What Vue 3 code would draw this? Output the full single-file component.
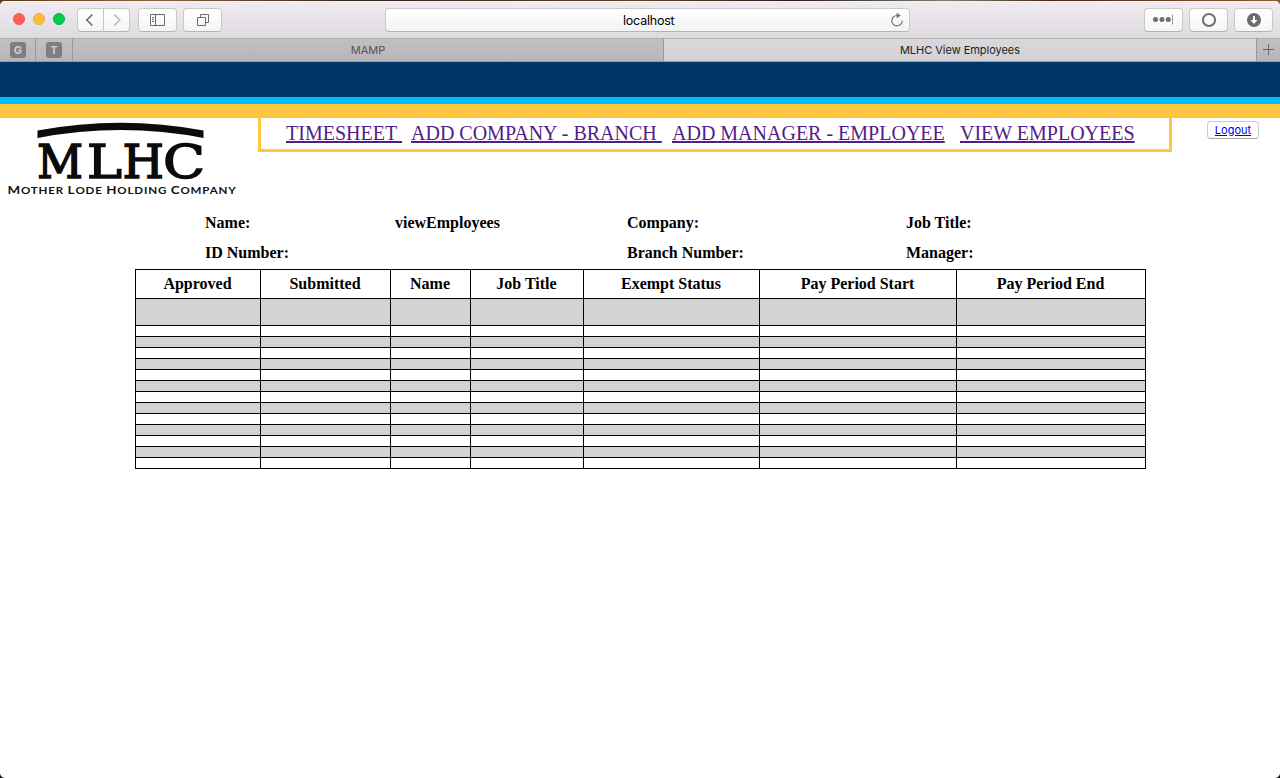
<script setup>
const links = ['TIMESHEET\u00a0', 'ADD COMPANY - BRANCH\u00a0', 'ADD MANAGER - EMPLOYEE', 'VIEW EMPLOYEES']
const info = ['Name:', 'viewEmployees', 'Company:', 'Job Title:', 'ID Number:', '', 'Branch Number:', 'Manager:']
const columns = [
  { label: 'Approved', width: 125 },
  { label: 'Submitted', width: 130 },
  { label: 'Name', width: 80 },
  { label: 'Job Title', width: 113 },
  { label: 'Exempt Status', width: 176 },
  { label: 'Pay Period Start', width: 197 },
  { label: 'Pay Period End', width: 189 },
]
</script>

<template>
  <div class="desktop">
    <div class="window">
      <header class="toolbar">
        <div class="lights"><i class="red"></i><i class="amber"></i><i class="green"></i></div>
        <div class="history">
          <button class="btn half"><svg width="25" height="22" viewBox="0 0 25 22"><path d="M14.300 5.600 8.800 11l5.500 5.500" fill="none" stroke="#666" stroke-width="1.500" /></svg></button>
          <button class="btn half"><svg width="25" height="22" viewBox="0 0 25 22"><path d="M10.300 5.600 15.800 11l-5.500 5.500" fill="none" stroke="#bbb" stroke-width="1.500" /></svg></button>
        </div>
        <button class="btn side"><svg width="37" height="22" viewBox="0 0 37 22"><path d="M11.500 5.500h14v11h-14zM16.500 5.500v11M13 8.500h2M13 10.500h2M13 12.500h2" fill="none" stroke="#6b6b6b" /></svg></button>
        <button class="btn pages"><svg width="37" height="22" viewBox="0 0 37 22"><path d="M13.500 8.500h8v8h-8zM16.500 8V5.500h8v8H22" fill="none" stroke="#6b6b6b" /></svg></button>
        <div class="address">
          <span>localhost</span>
          <svg class="reload" width="14" height="16" viewBox="0 0 14 16"><path d="M7 3.500A5.200 5.200 0 1 0 12.200 8.700" fill="none" stroke="#747474" stroke-width="1.200" /><path d="M6.600 .8v5.400l4.400-2.700z" fill="#747474" /></svg>
        </div>
        <div class="extras">
          <button class="btn"><svg width="37" height="22" viewBox="0 0 37 22"><g fill="#6e6e6e"><circle cx="10.500" cy="10.500" r="2.500" /><circle cx="17" cy="10.500" r="2.500" /><circle cx="23.300" cy="10.500" r="2.500" /></g><path d="M27.500 5.500v10" stroke="#999" /></svg></button>
          <button class="btn"><svg width="37" height="22" viewBox="0 0 37 22"><circle cx="19" cy="11" r="6.100" fill="none" stroke="#707070" stroke-width="2" /></svg></button>
          <button class="btn"><svg width="37" height="22" viewBox="0 0 37 22"><circle cx="19" cy="11" r="7" fill="#6b6b6b" /><path d="M18 7h2v4h2.500L19 15l-3.500-4H18z" fill="#fff" /></svg></button>
        </div>
      </header>

      <div class="tabs">
        <div class="pin"><b>G</b></div>
        <div class="pin"><b>T</b></div>
        <div class="tab mamp">MAMP</div>
        <div class="tab active">MLHC View Employees</div>
        <div class="plus"><svg width="23" height="22" viewBox="0 0 23 22"><path d="M6 10.500h11M11.500 5v11" stroke="#666" /></svg></div>
      </div>

      <div class="band navy"></div>
      <div class="band cyan"></div>
      <div class="band gold"></div>

      <section class="masthead">
        <svg class="logo" width="250" height="82" viewBox="0 0 250 82">
          <path d="M37.500 12.500Q121-3 203.500 12.500V20Q121 4 37.500 20z" fill="#0b0b0b" />
          <g class="letters">
            <text x="37" y="60" textLength="46" lengthAdjust="spacingAndGlyphs">M</text>
            <text x="87" y="60" textLength="35" lengthAdjust="spacingAndGlyphs">L</text>
            <text x="122.500" y="60" textLength="41.500" lengthAdjust="spacingAndGlyphs">H</text>
            <text x="163" y="60" textLength="42" lengthAdjust="spacingAndGlyphs">C</text>
          </g>
          <text class="company" x="7.500" y="76" textLength="229" lengthAdjust="spacingAndGlyphs">M<tspan class="sm">OTHER </tspan>L<tspan class="sm">ODE </tspan>H<tspan class="sm">OLDING </tspan>C<tspan class="sm">OMPANY</tspan></text>
        </svg>
        <nav><div v-for="l in links" :key="l"><a href="#">{{ l }}</a></div></nav>
        <button class="logout"><a href="#">Logout</a></button>
      </section>

      <main>
        <div class="info"><strong v-for="(t, i) in info" :key="i">{{ t }}</strong></div>
        <table>
          <colgroup><col v-for="c in columns" :key="c.label" :style="{ width: c.width + 'px' }"></colgroup>
          <thead><tr><th v-for="c in columns" :key="c.label">{{ c.label }}</th></tr></thead>
          <tbody><tr v-for="r in 14" :key="r"><td v-for="c in columns" :key="c.label"></td></tr></tbody>
        </table>
      </main>
    </div>
  </div>
</template>

<style>
body { overflow: hidden; }
</style>
<style scoped>
* { box-sizing: border-box; }
.desktop { height: 778px; padding-top: 1px; background: linear-gradient(90deg, #5d3a17, #8a6238 12%, #35241c 28%, #614328 50%, #2c1d18 62%, #77806e 74%, #4b2817 82%, #8b5b2d) top / 100% 10px no-repeat, #160d0c; }
.window { height: 777px; overflow: hidden; border-radius: 5px; background: #fff; font-family: "Liberation Serif", serif; color: #000; }
.toolbar { display: flex; height: 38px; padding: 0 7px 0 13px; background: linear-gradient(#f0ebf0, #dedbdf); border-bottom: 1px solid #b1afb2; border-top: 1px solid #f6f0f4; }
.lights { display: flex; gap: 8px; margin-top: 11px; }
.lights i { width: 12px; height: 12px; border-radius: 50%; }
.red { background: #ff5f57; border: 1px solid #ed5650; }
.amber { background: #ffbd3e; border: 1px solid #eba936; }
.green { background: #00cb4b; border: 1px solid #08b345; }
.btn { width: 39px; height: 24px; margin: 6px 0 0; padding: 0; border: 1px solid #cbc8cc; border-bottom-color: #b5b3b6; border-radius: 4px; background: linear-gradient(#fff, #f4f4f4); overflow: hidden; }
.btn svg { display: block; }
.history { display: flex; margin-left: 12px; }
.btn.half { width: 27px; }
.half + .half { margin-left: -1px; }
.half:first-child { border-radius: 4px 0 0 4px; }
.half:last-child { border-radius: 0 4px 4px 0; }
.side { margin-left: 8px; }
.pages { margin-left: 6px; }
.address { display: flex; align-items: center; width: 525px; height: 24px; margin: 6px 0 0 163px; padding: 0 5px 0 237px; border: 1px solid #cbc8cc; border-bottom-color: #b5b3b6; border-radius: 4px; background: linear-gradient(#fff, #f3f3f3); font: 12.5px Inter, sans-serif; letter-spacing: -.22px; }
.reload { margin-left: auto; }
.extras { display: flex; gap: 6px; margin-left: auto; }
.tabs { display: flex; height: 23px; border-bottom: 1px solid #9d9b9e; background: linear-gradient(#c1bfc1, #b8b6b8); font: 11px/22px Inter, sans-serif; }
.pin { width: 36px; padding: 3px 0 0 10px; border-right: 1px solid #999799; }
.pin + .pin { width: 37px; }
.pin b { display: block; width: 16px; height: 16px; border-radius: 3px; background: #7f7d7f; color: #cfcdcf; text-align: center; line-height: 16px; }
.tab { text-align: center; }
.mamp { width: 591px; border-right: 1px solid #999799; color: #555; }
.active { width: 593px; border-right: 1px solid #999799; background: linear-gradient(#dad8da, #d3d1d3); color: #222; letter-spacing: -.03px; }
.plus { width: 23px; }
.navy { height: 35px; background: #003669; }
.cyan { height: 7px; background: #00bfff; }
.gold { height: 14px; background: #ffc740; }
.masthead { display: flex; height: 90px; }
.logo { flex: none; width: 250px; margin: 0 8px 0 0; }
.letters { font: 47px "DejaVu Serif", serif; fill: #0b0b0b; stroke: #0b0b0b; stroke-width: 1.5px; }
.company { font: 700 11px Lato, sans-serif; letter-spacing: .7px; fill: #111; }
.sm { font-size: 9.5px; }
nav { display: grid; grid-template-columns: 125px 261px 288px auto; width: 914px; height: 34px; padding: 3px 0 0 25px; border: 3px solid #ffc740; border-top: 0; font-size: 20px; line-height: 24px; white-space: nowrap; }
nav a { color: #551a8b; }
.logout { width: 52px; height: 18px; margin: 3px 0 0 35px; padding: 0; border: 1px solid #ccc; border-bottom-color: #aaa; border-radius: 4px; background: #fff; font: 11px/15px Inter, sans-serif; }
.logout a { color: #0000ee; }
.info { display: grid; grid-template-columns: 190px 232px 279px auto; grid-auto-rows: 30px; padding-left: 205px; line-height: 30px; font-size: 16px; height: 61px; }
table { width: 1011px; margin-left: 135px; table-layout: fixed; border-collapse: separate; border-spacing: 0; border: solid #000; border-width: 1px 0 0 1px; font-size: 16px; }
th, td { padding: 0; border: solid #000; border-width: 0 1px 1px 0; }
th { height: 29px; line-height: 28px; padding-right: 1px; }
td { height: 11px; }
tbody tr:first-child td { height: 27px; }
tbody tr:nth-child(odd) { background: #d3d3d3; }
</style>
